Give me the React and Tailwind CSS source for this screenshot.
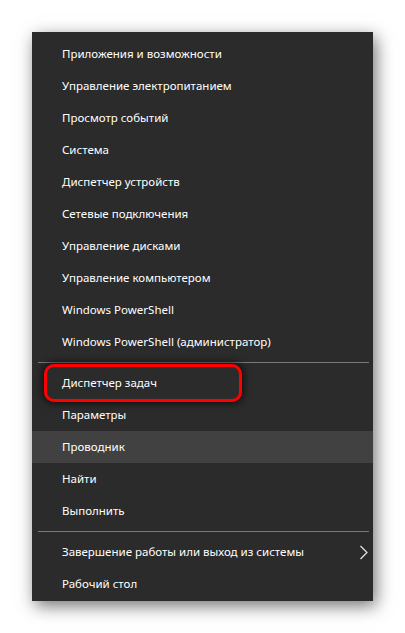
import React from 'react';

const groups = [
  [
    'Приложения и возможности',
    'Управление электропитанием',
    'Просмотр событий',
    'Система',
    'Диспетчер устройств',
    'Сетевые подключения',
    'Управление дисками',
    'Управление компьютером',
    'Windows PowerShell',
    'Windows PowerShell (администратор)',
  ],
  ['Диспетчер задач', 'Параметры', 'Проводник', 'Найти', 'Выполнить'],
  ['Завершение работы или выход из системы', 'Рабочий стол'],
];

const MenuItem = ({ label }) => {
  const active = label === 'Проводник';
  const marked = label === 'Диспетчер задач';
  const submenu = label.startsWith('Завершение');

  return (
    <div
      className={`relative flex h-8 items-center pl-[30px] pr-2 ${active ? 'bg-[#414141]' : ''}`}
    >
      <span className="text-[11.5px] text-white">{label}</span>
      {submenu && (
        <svg
          className="absolute right-[4px] top-[9px]"
          width="10"
          height="15"
          viewBox="0 0 10 15"
          fill="none"
        >
          <path d="M1.5 1 L8 7.5 L1.5 14" stroke="#e8e8e8" strokeWidth="1.2" />
        </svg>
      )}
      {marked && (
        <div className="absolute left-[12px] top-[-3px] h-[38px] w-[198px] rounded-[10px] border-[3.5px] border-[#ff0000] shadow-[0_0_7px_2px_rgba(0,0,0,0.6)]" />
      )}
    </div>
  );
};

export default function App() {
  return (
    <div className="h-[633px] w-[405px] bg-white pl-8 pt-8 font-['Noto_Sans',sans-serif]">
      <div className="w-[341px] bg-[#2b2b2b] pt-[6px] pb-[1px] shadow-[3px_5px_16px_rgba(0,0,0,0.55)]">
        {groups.map((group, i) => (
          <div key={i}>
            {i > 0 && (
              <div className="flex h-[9px] items-center pl-[6px] pr-[4px]">
                <div className="h-px w-full bg-[#7a7a7a]" />
              </div>
            )}
            {group.map((label) => (
              <MenuItem key={label} label={label} />
            ))}
          </div>
        ))}
      </div>
    </div>
  );
}
